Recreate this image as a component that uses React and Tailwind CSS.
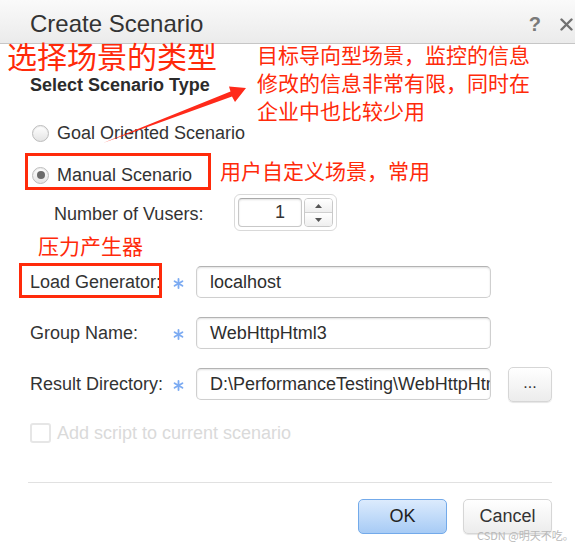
import React from 'react';

const ui = { fontFamily: '"Liberation Sans", Arial, sans-serif' };
const cjk = { fontFamily: '"Noto Sans CJK SC", "Noto Sans", sans-serif' };

function Star() {
  return (
    <div className="w-[16px] h-full flex items-center justify-center">
      <svg width="11" height="11" viewBox="0 0 12 12" className="mt-[3px]">
        <g stroke="#7cabf2" strokeWidth="2" strokeLinecap="round">
          <line x1="6" y1="1" x2="6" y2="11" />
          <line x1="1.7" y1="3.5" x2="10.3" y2="8.5" />
          <line x1="1.7" y1="8.5" x2="10.3" y2="3.5" />
        </g>
      </svg>
    </div>
  );
}

function Radio({ checked }) {
  return (
    <div className="w-[17px] h-[17px] rounded-full border border-[#bcbcbc] bg-gradient-to-b from-[#ffffff] to-[#e4e4e4] flex items-center justify-center shadow-[inset_0_1px_1px_rgba(0,0,0,0.08)]">
      {checked && <div className="w-[8px] h-[8px] rounded-full bg-[#6b6b6b]" />}
    </div>
  );
}

function TextField({ value }) {
  return (
    <div className="w-[295px] h-[32px] rounded-[5px] border border-[#cfcfcf] border-t-[#b3b3b3] bg-white shadow-[inset_0_1px_2px_rgba(0,0,0,0.12)] flex items-center pl-[13px] overflow-hidden whitespace-nowrap text-[18px] text-[#2e2e2e]">
      {value}
    </div>
  );
}

function FormRow({ label, value, browse }) {
  return (
    <div className="flex items-center h-[32px]">
      <div className="w-[140px] text-[18px] text-[#333]">{label}</div>
      <Star />
      <div className="ml-[10px]">
        <TextField value={value} />
      </div>
      {browse && (
        <button className="ml-[17px] w-[44px] h-[35px] rounded-[5px] border border-[#d6d6d6] bg-gradient-to-b from-[#ffffff] to-[#ececec] shadow-[0_1px_1px_rgba(0,0,0,0.1)] text-[16px] text-[#333] leading-none pb-[2px]">
          ...
        </button>
      )}
    </div>
  );
}

function Spinner() {
  return (
    <div className="w-[103px] h-[37px] rounded-[6px] border border-[#d9d9d9] p-[3px] flex gap-[2px] bg-white">
      <div className="w-[64px] h-full rounded-[4px] border border-[#c8c8c8] border-t-[#a9a9a9] shadow-[inset_0_1px_2px_rgba(0,0,0,0.12)] flex items-center justify-end pr-[16px] text-[18px] text-[#333]">
        1
      </div>
      <div className="flex-1 flex flex-col rounded-[4px] border border-[#c9c9c9] overflow-hidden">
        <div className="flex-1 flex items-center justify-center bg-gradient-to-b from-[#ffffff] to-[#efefef] border-b border-[#cfcfcf]">
          <svg width="7" height="4" viewBox="0 0 7 4"><path d="M0 4 L3.5 0 L7 4 Z" fill="#555" /></svg>
        </div>
        <div className="flex-1 flex items-center justify-center bg-gradient-to-b from-[#ffffff] to-[#efefef]">
          <svg width="7" height="4" viewBox="0 0 7 4"><path d="M0 0 L3.5 4 L7 0 Z" fill="#555" /></svg>
        </div>
      </div>
    </div>
  );
}

export default function App() {
  return (
    <div className="relative w-[575px] h-[546px] bg-white overflow-hidden" style={ui}>
      {/* title bar */}
      <div className="h-[44px] border-b border-[#c6c6c6] bg-gradient-to-b from-[#fafafa] to-[#ebebeb] flex items-center pl-[30px] pr-[2px] pt-[5px]">
        <div className="text-[24px] text-[#333]">Create Scenario</div>
        <div className="ml-auto flex items-center gap-[19px]">
          <span className="text-[20px] font-bold text-[#7a7a7a]">?</span>
          <svg width="13" height="13" viewBox="0 0 13 13">
            <g stroke="#717171" strokeWidth="2.4" strokeLinecap="round">
              <line x1="1.5" y1="1.5" x2="11.5" y2="11.5" />
              <line x1="11.5" y1="1.5" x2="1.5" y2="11.5" />
            </g>
          </svg>
        </div>
      </div>

      <div className="pl-[30px] pr-[23px]">
        <div className="mt-[31px] h-[20px] leading-[20px] text-[18px] font-bold text-[#2b2b2b]">Select Scenario Type</div>

        <div className="mt-[26px] h-[24px] flex items-center gap-[8px] pl-[2px]">
          <Radio />
          <span className="text-[18px] text-[#333]">Goal Oriented Scenario</span>
        </div>

        <div className="mt-[18px] h-[24px] flex items-center gap-[8px] pl-[2px]">
          <Radio checked />
          <span className="text-[18px] text-[#333]">Manual Scenario</span>
        </div>

        <div className="mt-[7px] h-[37px] flex items-center">
          <div className="w-[204px] pl-[24px] text-[18px] text-[#333] pt-[3px]">Number of Vusers:</div>
          <Spinner />
        </div>

        <div className="mt-[35px] flex flex-col gap-[19px]">
          <FormRow label="Load Generator:" value="localhost" />
          <FormRow label="Group Name:" value="WebHttpHtml3" />
          <FormRow label="Result Directory:" value="D:\PerformanceTesting\WebHttpHtml3\res" browse />
        </div>

        <div className="mt-[23px] h-[20px] flex items-center gap-[6px]">
          <div className="w-[21px] h-[20px] rounded-[3px] border-2 border-[#e6e6e6]" />
          <span className="text-[18px] text-[#dadada]">Add script to current scenario</span>
        </div>

        <div className="mt-[39px] ml-[-2px] h-px bg-[#e1e1e1]" />

        <div className="mt-[16px] flex justify-end gap-[16px]">
          <button className="w-[89px] h-[35px] rounded-[5px] border border-[#73aaea] bg-gradient-to-b from-[#dcebfd] to-[#a7cbf5] text-[18px] text-[#222]">
            OK
          </button>
          <button className="w-[89px] h-[35px] rounded-[5px] border border-[#d6d6d6] bg-gradient-to-b from-[#ffffff] to-[#ececec] shadow-[0_1px_1px_rgba(0,0,0,0.1)] text-[18px] text-[#333]">
            Cancel
          </button>
        </div>
      </div>

      {/* annotations drawn over the screenshot */}
      <div className="absolute left-[7px] top-[40px] text-[30px] leading-[30px] text-[#ff2a0a] whitespace-nowrap" style={cjk}>
        选择场景的类型
      </div>
      <div className="absolute left-[257px] top-[40px] text-[21px] leading-[28px] text-[#ff2a0a] whitespace-nowrap" style={cjk}>
        <div>目标导向型场景，监控的信息</div>
        <div>修改的信息非常有限，同时在</div>
        <div>企业中也比较少用</div>
      </div>
      <div className="absolute left-[220px] top-[156px] text-[21px] leading-[28px] text-[#ff2a0a] whitespace-nowrap" style={cjk}>
        用户自定义场景，常用
      </div>
      <div className="absolute left-[38px] top-[231px] text-[21px] leading-[28px] text-[#ff2a0a] whitespace-nowrap" style={cjk}>
        压力产生器
      </div>
      <div className="absolute left-[25px] top-[153px] w-[186px] h-[37px] border-[3px] border-[#ff2a0a]" />
      <div className="absolute left-[19px] top-[263px] w-[143px] h-[35px] border-[3px] border-[#ff2a0a]" />
      <svg className="absolute left-0 top-0 pointer-events-none" width="575" height="546">
        <polygon points="103,143 232,96.5 235,102 246,88 229,86.5 230.5,91.5" fill="#ff2a1a" />
      </svg>
      <div className="absolute left-[477px] top-[527px] text-[11px] text-[#b9b9b9] whitespace-nowrap" style={cjk}>
        CSDN @明天不吃。
      </div>
    </div>
  );
}
